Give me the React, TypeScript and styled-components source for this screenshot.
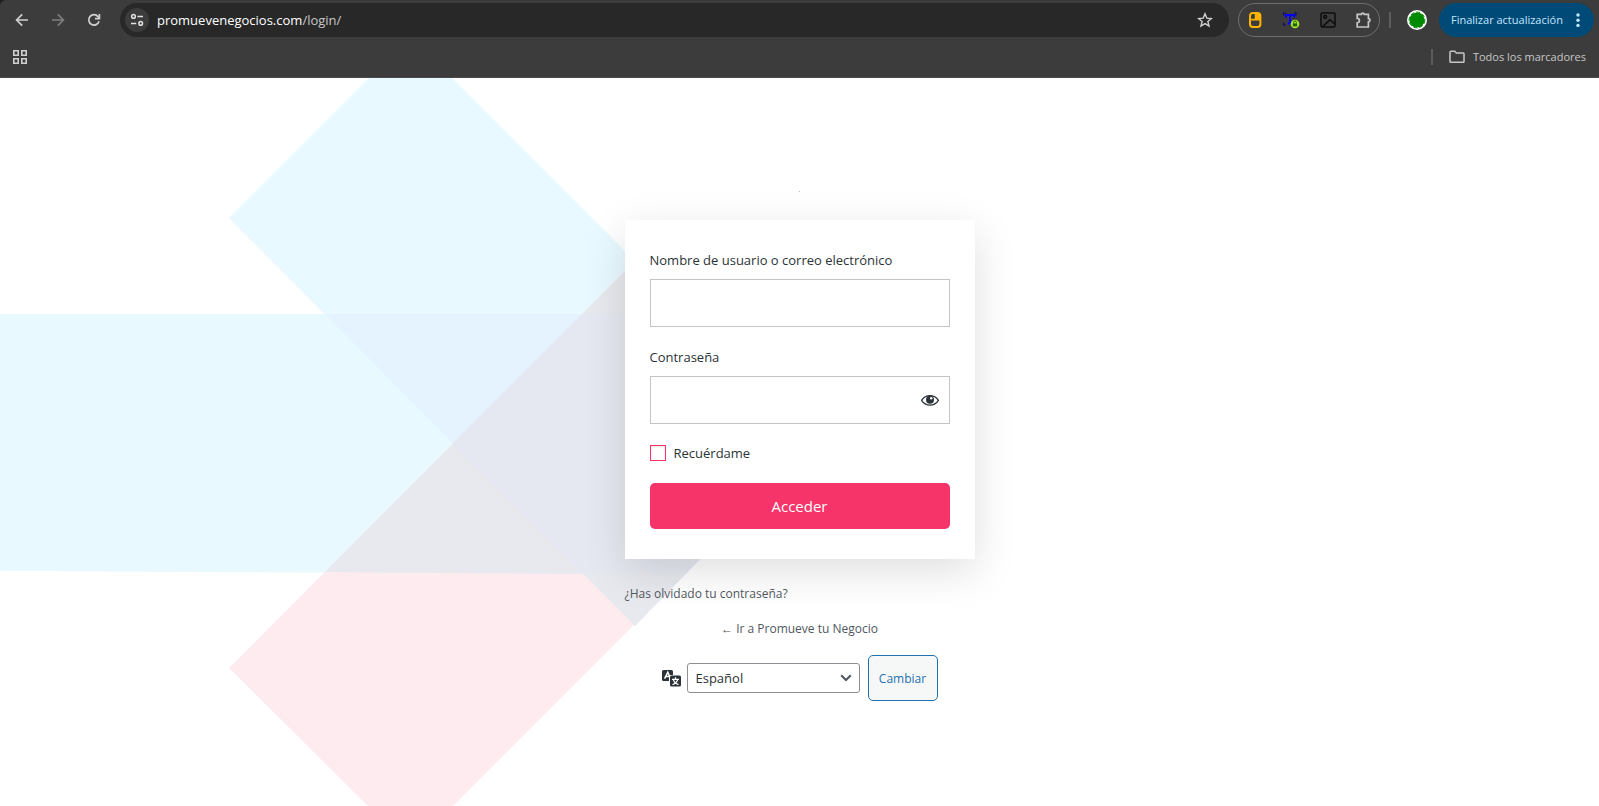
import React from 'react';
import styled, { createGlobalStyle } from 'styled-components';

const GlobalStyle = createGlobalStyle`
  *, *::before, *::after { box-sizing: border-box; }
  html, body, #root { height: 100%; }
  body {
    margin: 0;
    background: #fff;
    font-family: 'Segoe UI', 'Open Sans', 'Noto Sans', sans-serif;
    font-size: 13px;
    color: #2c3338;
  }
  button, input, select { font-family: inherit; margin: 0; }
  svg { display: block; }
`;

const Window = styled.div`
  min-height: 100%;
  display: flex;
  flex-direction: column;
`;

/* ---------- Browser chrome ---------- */

const Chrome = styled.header`
  background: #3c3c3c;
  border-top-left-radius: 6px;
  border-bottom: 1px solid #4a4a4a;
  box-shadow: -6px -6px 0 #1f1f1f;
`;

const Toolbar = styled.div`
  height: 40px;
  display: flex;
  align-items: center;
  padding: 0 5px 0 11px;
`;

const NavGroup = styled.nav`
  display: flex;
  gap: 14px;
`;

const IconButton = styled.button<{ $dim?: boolean }>`
  width: 22px;
  height: 22px;
  padding: 0;
  border: 0;
  background: none;
  display: grid;
  place-items: center;
  color: ${({ $dim }) => ($dim ? '#7d7d7d' : '#d0d0d0')};
`;

const AddressBar = styled.div`
  flex: 1;
  height: 34px;
  margin: 0 9px 0 15px;
  padding: 0 13px 0 5px;
  display: flex;
  align-items: center;
  gap: 8px;
  border-radius: 17px;
  background: #282828;
`;

const SiteInfo = styled.button`
  width: 24px;
  height: 24px;
  padding: 0;
  border: 0;
  border-radius: 50%;
  display: grid;
  place-items: center;
  background: #3c3c3c;
  color: #e3e3e3;
`;

const Url = styled.span`
  flex: 1;
  font-size: 13px;
  line-height: 20px;
  color: #c7c7c7;
  b { font-weight: 400; color: #fff; }
`;

const Extensions = styled.div`
  height: 34px;
  width: 142px;
  padding: 0 4px 0 5px;
  display: flex;
  align-items: center;
  justify-content: space-between;
  border: 1px solid #6f6f6f;
  border-radius: 17px;
`;

const Divider = styled.span`
  width: 2px;
  height: 16px;
  background: #5c5c5c;
`;

const ProfileArea = styled.div`
  display: flex;
  align-items: center;
  gap: 15px;
  margin: 0 11px 0 9px;
`;

const UpdateButton = styled.button`
  height: 34px;
  width: 155px;
  padding: 0 9px 0 12px;
  display: flex;
  align-items: center;
  justify-content: space-between;
  border: 0;
  border-radius: 17px;
  background: #004a77;
  color: #c2e7ff;
  font-size: 11px;
  line-height: 20px;
  white-space: nowrap;
`;

const Bookmarks = styled.div`
  height: 37px;
  padding: 0 13px 3px 9px;
  display: flex;
  align-items: center;
  justify-content: space-between;
`;

const BookmarkTools = styled.div`
  display: flex;
  align-items: center;
  gap: 16px;
`;

const BookmarkButton = styled.button`
  padding: 0;
  border: 0;
  background: none;
  display: flex;
  align-items: center;
  gap: 8px;
  color: #c7c7c7;
  font-size: 11px;
  line-height: 20px;
`;

/* ---------- Login page ---------- */

const Page = styled.main`
  position: relative;
  flex: 1;
  overflow: hidden;
  background: #fff;
`;

const Backdrop = styled.svg`
  position: absolute;
  top: 0;
  left: 0;
  z-index: 0;
`;

const Login = styled.div`
  position: relative;
  z-index: 1;
  max-width: 350px;
  margin: 0 auto;
  padding: 113px 0 24px;
`;

const Logo = styled.a`
  display: block;
  width: 1px;
  height: 1px;
  margin: 0 auto 28px;
  background: #d9b59a;
`;

const Card = styled.form`
  display: flex;
  flex-direction: column;
  padding: 29px 25px 30px;
  background: #fff;
  box-shadow: 0 12px 40px rgba(0, 0, 0, 0.13);
`;

const Label = styled.label`
  font-size: 13px;
  line-height: 23px;
  margin-bottom: 7px;
`;

const Field = styled.div`
  position: relative;
  margin-bottom: 19px;
`;

const TextInput = styled.input`
  display: block;
  width: 100%;
  height: 48px;
  padding: 4px 40px 4px 12px;
  border: 1px solid #c3c4c7;
  border-radius: 0;
  background: #fff;
  font-size: 16px;
  outline: 0;
`;

const EyeButton = styled.button`
  position: absolute;
  top: 4px;
  right: 0;
  width: 40px;
  height: 40px;
  padding: 0;
  border: 0;
  background: none;
  display: grid;
  place-items: center;
  color: #2c3338;
`;

const Remember = styled.label`
  display: flex;
  align-items: center;
  gap: 8px;
  font-size: 13px;
  line-height: 20px;
  margin-bottom: 20px;
`;

const Checkbox = styled.input`
  appearance: none;
  width: 16px;
  height: 16px;
  margin: 0;
  border: 1px solid #f73469;
  background: #fff;
  box-shadow: inset 0 1px 2px rgba(0, 0, 0, 0.1);
`;

const Submit = styled.button`
  height: 46px;
  border: 0;
  border-radius: 5px;
  background: #f73469;
  color: #fff;
  font-size: 15px;
  line-height: 20px;
`;

const PageLink = styled.a<{ $center?: boolean }>`
  display: block;
  margin-top: ${({ $center }) => ($center ? '15px' : '25px')};
  text-align: ${({ $center }) => ($center ? 'center' : 'left')};
  font-size: 12px;
  line-height: 20px;
  color: #50575e;
  text-decoration: none;
`;

const Language = styled.form`
  display: flex;
  align-items: center;
  justify-content: center;
  margin-top: 16px;
`;

const SelectWrap = styled.div`
  position: relative;
  margin: 0 8px 0 5px;
  svg { position: absolute; right: 8px; top: 10px; pointer-events: none; }
`;

const Select = styled.select`
  display: block;
  appearance: none;
  width: 173px;
  height: 30px;
  padding: 0 24px 0 8px;
  border: 1px solid #8c8f94;
  border-radius: 3px;
  background: #fff;
  color: #2c3338;
  font-size: 13px;
  line-height: 20px;
`;

const ChangeButton = styled.button`
  width: 70px;
  height: 46px;
  padding: 0;
  border: 1px solid #2271b1;
  border-radius: 5px;
  background: #f6f7f7;
  color: #2271b1;
  font-size: 12px;
`;

const BackIcon = () => (
  <svg width="14" height="14" viewBox="0 0 14 14" fill="none" stroke="currentColor" strokeWidth="1.7">
    <path d="M13 7H2M7.2 1.4L1.6 7l5.6 5.6" />
  </svg>
);

const ForwardIcon = () => (
  <svg width="14" height="14" viewBox="0 0 14 14" fill="none" stroke="currentColor" strokeWidth="1.7">
    <path d="M1 7h11M6.8 1.4L12.4 7l-5.6 5.6" />
  </svg>
);

const ReloadIcon = () => (
  <svg width="14" height="14" viewBox="0 0 14 14" fill="none" stroke="currentColor" strokeWidth="1.7">
    <path d="M12 8.2A5.2 5.2 0 1 1 11 3.6L12.2 5" />
    <path d="M12.4 1v4.6H8" />
  </svg>
);

const TuneIcon = () => (
  <svg width="14" height="14" viewBox="0 0 14 14" fill="none" stroke="currentColor" strokeWidth="1.5">
    <circle cx="3.5" cy="3.4" r="1.8" />
    <path d="M7.4 3.4H13M1 10.4h5.2" />
    <circle cx="10.7" cy="10.4" r="1.8" />
  </svg>
);

const StarIcon = () => (
  <svg width="16" height="16" viewBox="0 0 16 16" fill="none" stroke="currentColor" strokeWidth="1.4">
    <path d="M8 1.8l1.8 4.3 4.6.4-3.5 3 1.1 4.6L8 11.6l-4 2.5 1.1-4.6-3.5-3 4.6-.4z" />
  </svg>
);

const MouseIcon = () => (
  <svg width="14" height="18" viewBox="0 0 14 18" fill="none">
    <rect x="2" y="2" width="10.400" height="14" rx="3" fill="#3c3c3c" stroke="#ffb400" strokeWidth="2" />
    <path d="M7.600 2h2a3 3 0 0 1 3 3v4h-5z" fill="#ffb400" />
    <path d="M2 8.600h10.400M7.600 2v7" stroke="#ffb400" strokeWidth="1.600" />
  </svg>
);

const TextLockIcon = () => (
  <svg width="18" height="18" viewBox="0 0 18 18" fill="none">
    <path d="M1.600 4.500V2H4M12 2h2v2.500M1.600 11.600V14H4" stroke="#0a0a78" strokeWidth="1.200" />
    <path d="M3.900 6.400V3.900h8.400v2.500M8 3.900v8.500M6 12.400h4" stroke="#0000ff" strokeWidth="2" />
    <circle cx="13" cy="13" r="4.300" fill="#a6ee26" />
    <rect x="10.800" y="12.400" width="4.400" height="3" fill="#255c0a" />
    <path d="M11.600 12.400v-1a1.400 1.400 0 0 1 2.800 0v1" stroke="#255c0a" />
  </svg>
);

const PictureIcon = () => (
  <svg width="16" height="16" viewBox="0 0 16 16" fill="none" stroke="#0c0c0c" strokeWidth="1.500">
    <rect x="1" y="1" width="14" height="14" rx="1.500" />
    <circle cx="5.200" cy="5" r="1.400" />
    <path d="M3 14.400l7-6.600 5 4.400" />
  </svg>
);

const PuzzleIcon = () => (
  <svg width="18" height="18" viewBox="0 0 18 18" fill="none" stroke="#c7c7c7" strokeWidth="1.700">
    <path d="M2.200 3.400h4.200a1.400 1.400 0 0 1 2.800 0h4.200v4.200a1.600 1.600 0 0 1 0 3.200V16H2.200v-4.200a2.200 2.200 0 0 0 0-4.400z" />
  </svg>
);

const ProfileIcon = () => (
  <svg width="20" height="20" viewBox="0 0 20 20">
    <circle cx="10" cy="10" r="10" fill="#fff" />
    <circle cx="10" cy="10" r="7.600" fill="#008a00" />
    <circle cx="10" cy="10" r="7.900" fill="none" stroke="#008a00" strokeWidth="1" strokeDasharray="4 2" />
  </svg>
);

const DotsIcon = () => (
  <svg width="14" height="16" viewBox="0 0 14 16" fill="currentColor">
    <circle cx="7" cy="3" r="1.700" />
    <circle cx="7" cy="8.200" r="1.700" />
    <circle cx="7" cy="13.400" r="1.700" />
  </svg>
);

const AppsIcon = () => (
  <svg width="14" height="14" viewBox="0 0 14 14" fill="none" stroke="currentColor" strokeWidth="1.600">
    <path d="M.8.8h4.400v4.400H.8zM8.800.8h4.400v4.400H8.800zM.8 8.800h4.400v4.400H.8zM8.800 8.800h4.400v4.400H8.800z" />
  </svg>
);

const FolderIcon = () => (
  <svg width="16" height="14" viewBox="0 0 16 14" fill="none" stroke="currentColor" strokeWidth="1.500">
    <path d="M1 11.400V2a.8.8 0 0 1 .8-.8h3.900l1.600 1.700h6.900a.8.8 0 0 1 .8.8v7.700a.8.8 0 0 1-.8.8H1.800a.8.8 0 0 1-.8-.8z" />
  </svg>
);

const EyeIcon = () => (
  <svg width="20" height="20" viewBox="0 0 20 20">
    <path
      d="M1.600 10.400C3.600 7.200 6.600 5.600 10 5.600s6.400 1.600 8.400 4.800c-2 3.200-5 4.800-8.400 4.800S3.600 13.600 1.600 10.400z"
      fill="none"
      stroke="currentColor"
      strokeWidth="1.300"
    />
    <circle cx="10" cy="9.800" r="4" fill="currentColor" />
    <circle cx="11.200" cy="8.300" r="1.200" fill="#fff" />
  </svg>
);

const TranslateIcon = () => (
  <svg width="20" height="20" viewBox="0 0 20 20" fill="none">
    <path d="M1.500 2h8A1.500 1.500 0 0 1 11 3.500V7H8.500A1.500 1.500 0 0 0 7 8.500V13H1.500A1.500 1.500 0 0 1 0 11.500v-8A1.500 1.500 0 0 1 1.500 2z" fill="#2c3338" />
    <path d="M2.600 10.600L5.800 4.200l2 4.600M3.800 8.600h3.400" stroke="#fff" strokeWidth="1.500" />
    <rect x="8" y="7.500" width="11" height="11" rx="1.500" fill="#2c3338" />
    <path d="M13.500 9.300v1.800M10 11.300h7M11.300 11.600c.8 2.600 2.800 4.200 5.200 5M15.700 11.600c-.8 2.600-2.800 4.200-5.200 5" stroke="#fff" strokeWidth="1.300" />
  </svg>
);

const ChevronIcon = () => (
  <svg width="12" height="10" viewBox="0 0 12 10" fill="none" stroke="#50575e" strokeWidth="2">
    <path d="M1.200 2.200L6 7l4.800-4.800" />
  </svg>
);

const Shapes = () => (
  <Backdrop width="760" height="728" viewBox="0 0 760 728" aria-hidden="true">
    <path d="M229 140L369 0h83l248 248v234l-65 66z" fill="#e8f9ff" />
    <path d="M0 236h650v258l-67 2L0 493z" fill="#e8f9ff" />
    <path d="M325 236h335v258l-77 2z" fill="#e4f3ff" />
    <path d="M229 590L625 193h75v288L453 728h-85z" fill="#feebef" />
    <path d="M325 494L625 193h75v288l-65 67-52-52z" fill="#e8e9ee" />
    <path d="M452 366L582 236h118v245l-14 14-103 1z" fill="#e5e8f0" />
  </Backdrop>
);

export default function App() {
  return (
    <Window>
      <GlobalStyle />
      <Chrome>
        <Toolbar>
          <NavGroup aria-label="Navegación">
            <IconButton aria-label="Atrás"><BackIcon /></IconButton>
            <IconButton $dim aria-label="Adelante"><ForwardIcon /></IconButton>
            <IconButton aria-label="Recargar"><ReloadIcon /></IconButton>
          </NavGroup>
          <AddressBar>
            <SiteInfo aria-label="Información del sitio"><TuneIcon /></SiteInfo>
            <Url><b>promuevenegocios.com</b>/login/</Url>
            <IconButton aria-label="Añadir a marcadores"><StarIcon /></IconButton>
          </AddressBar>
          <Extensions>
            <IconButton aria-label="Ratón"><MouseIcon /></IconButton>
            <IconButton aria-label="Texto"><TextLockIcon /></IconButton>
            <IconButton aria-label="Imagen"><PictureIcon /></IconButton>
            <IconButton aria-label="Extensiones"><PuzzleIcon /></IconButton>
          </Extensions>
          <ProfileArea>
            <Divider />
            <IconButton aria-label="Perfil"><ProfileIcon /></IconButton>
          </ProfileArea>
          <UpdateButton>Finalizar actualización<DotsIcon /></UpdateButton>
        </Toolbar>
        <Bookmarks>
          <IconButton aria-label="Aplicaciones"><AppsIcon /></IconButton>
          <BookmarkTools>
            <Divider />
            <BookmarkButton><FolderIcon />Todos los marcadores</BookmarkButton>
          </BookmarkTools>
        </Bookmarks>
      </Chrome>

      <Page>
        <Shapes />
        <Login>
          <Logo href="#" aria-label="Promueve tu Negocio" />
          <Card onSubmit={(e) => e.preventDefault()}>
            <Label htmlFor="user">Nombre de usuario o correo electrónico</Label>
            <Field>
              <TextInput id="user" type="text" />
            </Field>
            <Label htmlFor="pass">Contraseña</Label>
            <Field>
              <TextInput id="pass" type="password" />
              <EyeButton type="button" aria-label="Mostrar contraseña"><EyeIcon /></EyeButton>
            </Field>
            <Remember>
              <Checkbox type="checkbox" />
              Recuérdame
            </Remember>
            <Submit type="submit">Acceder</Submit>
          </Card>
          <PageLink href="#">¿Has olvidado tu contraseña?</PageLink>
          <PageLink $center href="#">← Ir a Promueve tu Negocio</PageLink>
          <Language onSubmit={(e) => e.preventDefault()}>
            <TranslateIcon />
            <SelectWrap>
              <Select aria-label="Idioma" defaultValue="es">
                <option value="es">Español</option>
                <option value="en">English</option>
              </Select>
              <ChevronIcon />
            </SelectWrap>
            <ChangeButton type="submit">Cambiar</ChangeButton>
          </Language>
        </Login>
      </Page>
    </Window>
  );
}
